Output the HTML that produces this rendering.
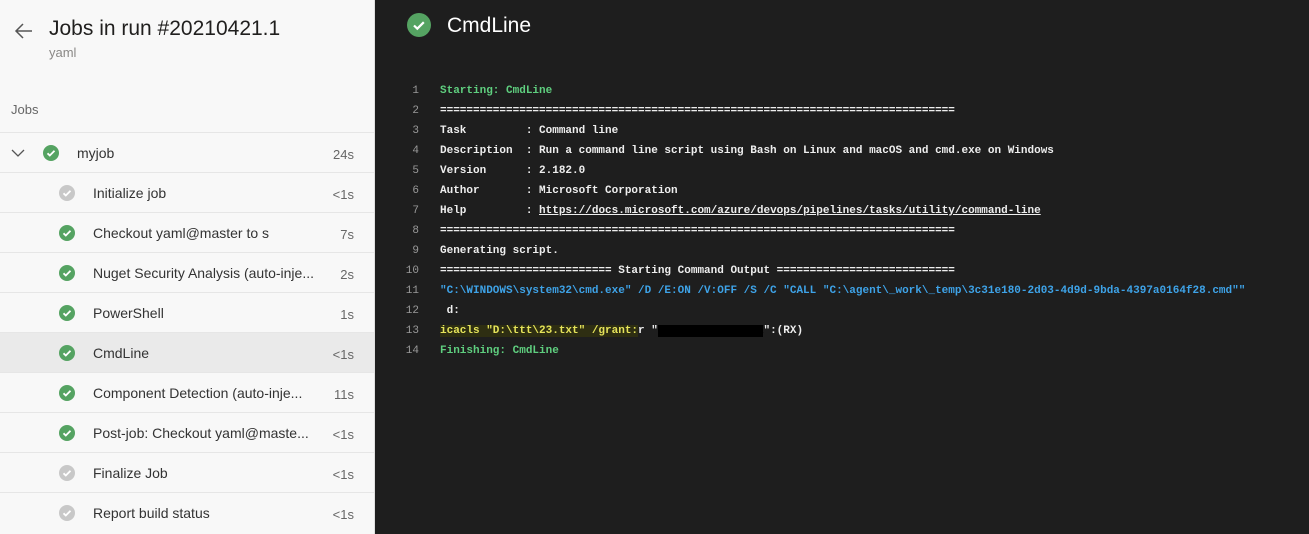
<!DOCTYPE html>
<html><head><meta charset="utf-8"><style>
*{margin:0;padding:0;box-sizing:border-box}
body{width:1309px;height:534px;overflow:hidden;font-family:"Liberation Sans",sans-serif;background:#1e1e1e;position:relative}
#left{position:absolute;left:0;top:0;width:375px;height:534px;background:#f8f8f8;border-right:1px solid #e0e0e0}
.back{position:absolute;left:14px;top:22px}
h1{position:absolute;left:49px;top:17px;font-size:21px;font-weight:normal;color:#201f1e}
.sub{position:absolute;left:49px;top:45px;font-size:13px;color:#8a8886}
.jobs{position:absolute;left:11px;top:102px;font-size:13px;color:#666}
.row{position:absolute;left:0;width:374px;height:40px;border-top:1px solid #e6e6e6;font-size:14px;color:#333}
.row.sel{background:#eaeaea}
.row .ic{position:absolute;top:12px}
.row .t{position:absolute;top:12px}
.row .d{position:absolute;right:20px;top:14px;font-size:13px;color:#666}
#right{position:absolute;left:375px;top:0;right:0;bottom:0}
.title{position:absolute;left:72px;top:14px;font-size:21px;color:#fff}
.log{position:absolute;left:0;top:81px;font-family:"Liberation Mono",monospace;font-size:11px;color:#eee;font-weight:bold}
.ln{position:absolute;left:0;height:20px;line-height:20px;white-space:pre}
.ln .n{position:absolute;left:30px;width:14px;text-align:right;color:#999;font-weight:normal}
.ln .c{position:absolute;left:65px}
.g{color:#5fcf7f}.b{color:#3ea3e8}
</style></head><body>
<div id="left">
<svg class="back" width="20" height="18" viewBox="0 0 20 18"><path d="M18 9H3M9 2L2 9l7 7" fill="none" stroke="#555" stroke-width="1.5"/></svg>
<h1>Jobs in run #20210421.1</h1>
<div class="sub">yaml</div>
<div class="jobs">Jobs</div>

<div class="row" style="top:132px"><svg class="ic" style="left:11px;top:15px" width="14" height="10"><path d="M1 2l6 6 6-6" fill="none" stroke="#555" stroke-width="1.3"/></svg><svg class="ic" style="left:43px" width="16" height="16"><circle cx="8" cy="8" r="8" fill="#55a362"/><path d="M4.5 8.3l2.3 2.2 4.7-4.7" fill="none" stroke="#fff" stroke-width="1.8"/></svg><span class="t" style="left:77px">myjob</span><span class="d">24s</span></div>
<div class="row" style="top:172px"><svg class="ic" style="left:59px" width="16" height="16"><circle cx="8" cy="8" r="8" fill="#c8c8c8"/><path d="M4.5 8.3l2.3 2.2 4.7-4.7" fill="none" stroke="#fff" stroke-width="1.8"/></svg><span class="t" style="left:93px">Initialize job</span><span class="d">&lt;1s</span></div>
<div class="row" style="top:212px"><svg class="ic" style="left:59px" width="16" height="16"><circle cx="8" cy="8" r="8" fill="#55a362"/><path d="M4.5 8.3l2.3 2.2 4.7-4.7" fill="none" stroke="#fff" stroke-width="1.8"/></svg><span class="t" style="left:93px">Checkout yaml@master to s</span><span class="d">7s</span></div>
<div class="row" style="top:252px"><svg class="ic" style="left:59px" width="16" height="16"><circle cx="8" cy="8" r="8" fill="#55a362"/><path d="M4.5 8.3l2.3 2.2 4.7-4.7" fill="none" stroke="#fff" stroke-width="1.8"/></svg><span class="t" style="left:93px">Nuget Security Analysis (auto-inje...</span><span class="d">2s</span></div>
<div class="row" style="top:292px"><svg class="ic" style="left:59px" width="16" height="16"><circle cx="8" cy="8" r="8" fill="#55a362"/><path d="M4.5 8.3l2.3 2.2 4.7-4.7" fill="none" stroke="#fff" stroke-width="1.8"/></svg><span class="t" style="left:93px">PowerShell</span><span class="d">1s</span></div>
<div class="row sel" style="top:332px"><svg class="ic" style="left:59px" width="16" height="16"><circle cx="8" cy="8" r="8" fill="#55a362"/><path d="M4.5 8.3l2.3 2.2 4.7-4.7" fill="none" stroke="#fff" stroke-width="1.8"/></svg><span class="t" style="left:93px">CmdLine</span><span class="d">&lt;1s</span></div>
<div class="row" style="top:372px"><svg class="ic" style="left:59px" width="16" height="16"><circle cx="8" cy="8" r="8" fill="#55a362"/><path d="M4.5 8.3l2.3 2.2 4.7-4.7" fill="none" stroke="#fff" stroke-width="1.8"/></svg><span class="t" style="left:93px">Component Detection (auto-inje...</span><span class="d">11s</span></div>
<div class="row" style="top:412px"><svg class="ic" style="left:59px" width="16" height="16"><circle cx="8" cy="8" r="8" fill="#55a362"/><path d="M4.5 8.3l2.3 2.2 4.7-4.7" fill="none" stroke="#fff" stroke-width="1.8"/></svg><span class="t" style="left:93px">Post-job: Checkout yaml@maste...</span><span class="d">&lt;1s</span></div>
<div class="row" style="top:452px"><svg class="ic" style="left:59px" width="16" height="16"><circle cx="8" cy="8" r="8" fill="#c8c8c8"/><path d="M4.5 8.3l2.3 2.2 4.7-4.7" fill="none" stroke="#fff" stroke-width="1.8"/></svg><span class="t" style="left:93px">Finalize Job</span><span class="d">&lt;1s</span></div>
<div class="row" style="top:492px"><svg class="ic" style="left:59px" width="16" height="16"><circle cx="8" cy="8" r="8" fill="#c8c8c8"/><path d="M4.5 8.3l2.3 2.2 4.7-4.7" fill="none" stroke="#fff" stroke-width="1.8"/></svg><span class="t" style="left:93px">Report build status</span><span class="d">&lt;1s</span></div>
</div>

<div id="right">
<svg style="position:absolute;left:32px;top:13px" width="24" height="24"><circle cx="12" cy="12" r="12" fill="#55a362"/><path d="M7 12.5l3.3 3.2 6.5-6.5" fill="none" stroke="#fff" stroke-width="2.2"/></svg>
<div class="title">CmdLine</div>
<div class="log">
<div class="ln" style="top:0"><span class="n">1</span><span class="c g">Starting: CmdLine</span></div>
<div class="ln" style="top:20px"><span class="n">2</span><span class="c">==============================================================================</span></div>
<div class="ln" style="top:40px"><span class="n">3</span><span class="c">Task         : Command line</span></div>
<div class="ln" style="top:60px"><span class="n">4</span><span class="c">Description  : Run a command line script using Bash on Linux and macOS and cmd.exe on Windows</span></div>
<div class="ln" style="top:80px"><span class="n">5</span><span class="c">Version      : 2.182.0</span></div>
<div class="ln" style="top:100px"><span class="n">6</span><span class="c">Author       : Microsoft Corporation</span></div>
<div class="ln" style="top:120px"><span class="n">7</span><span class="c">Help         : <u>https://docs.microsoft.com/azure/devops/pipelines/tasks/utility/command-line</u></span></div>
<div class="ln" style="top:140px"><span class="n">8</span><span class="c">==============================================================================</span></div>
<div class="ln" style="top:160px"><span class="n">9</span><span class="c">Generating script.</span></div>
<div class="ln" style="top:180px"><span class="n">10</span><span class="c">========================== Starting Command Output ===========================</span></div>
<div class="ln" style="top:200px"><span class="n">11</span><span class="c b">"C:\WINDOWS\system32\cmd.exe" /D /E:ON /V:OFF /S /C "CALL "C:\agent\_work\_temp\3c31e180-2d03-4d9d-9bda-4397a0164f28.cmd""</span></div>
<div class="ln" style="top:220px"><span class="n">12</span><span class="c"> d:</span></div>
<div class="ln" style="top:240px"><span class="n">13</span><span class="c"><span style="background:#2e2e12;color:#e5e35a">icacls "D:\ttt\23.txt" /grant:</span>r "<span style="background:#000;color:#000">XXXXXXXXXXXXXXXX</span>":(RX)</span></div>
<div class="ln" style="top:260px"><span class="n">14</span><span class="c g">Finishing: CmdLine</span></div>
</div>
</div>
</body></html>
